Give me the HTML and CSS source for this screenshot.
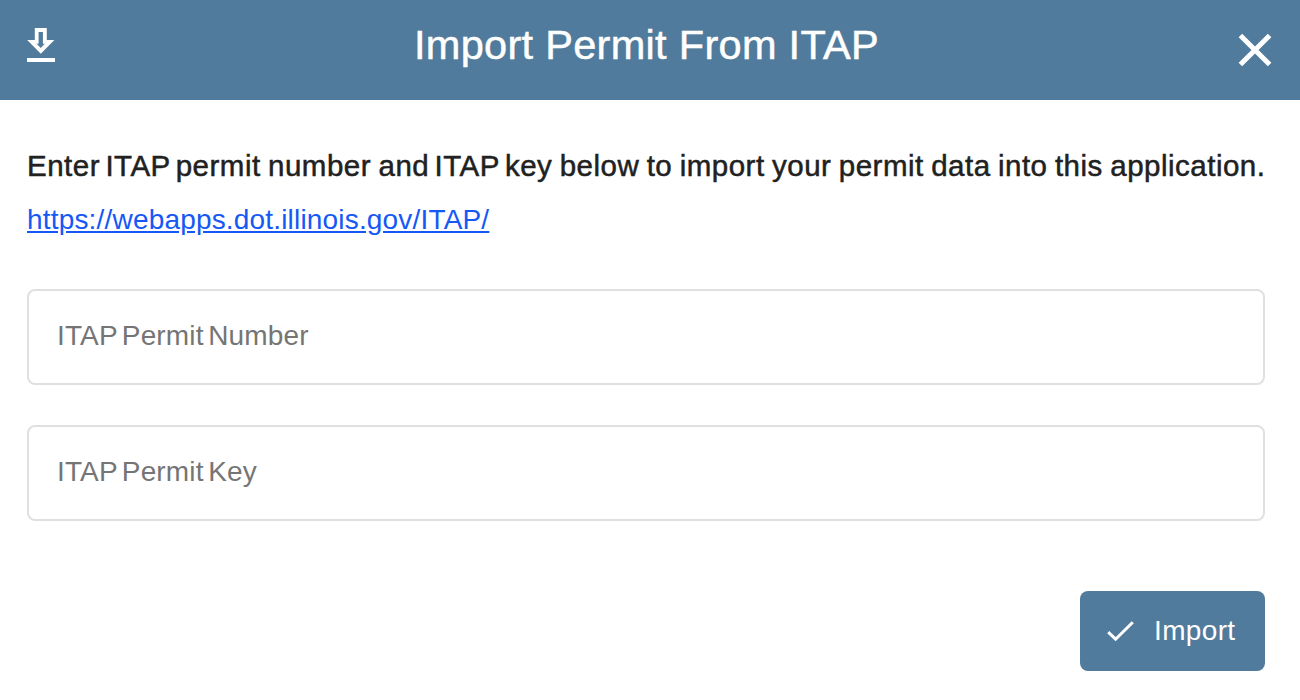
FILE: index.html
```html
<!DOCTYPE html>
<html lang="en">
<head>
    <meta charset="UTF-8">
    <meta name="viewport" content="width=device-width, initial-scale=1.0">
    <title>Import Permit From ITAP</title>
    <link rel="stylesheet" href="styles.css">
</head>
<body>
    <div class="dialog">
        <header class="dialog-header">
            <svg class="icon-download" viewBox="0 0 28 35" aria-hidden="true">
                <path d="M7.8 0h12v12h7.6L13.8 25.8.2 12h7.6zM11.6 4v11.7h-2l4.1 4.3 4.1-4.3h-1.9V4z" fill="currentColor" fill-rule="evenodd"/>
                <path d="M0 30h28v4H0z" fill="currentColor"/>
            </svg>
            <h1>Import Permit From ITAP</h1>
            <button class="close-btn" type="button" aria-label="Close">
                <svg viewBox="0 0 34 34" aria-hidden="true">
                    <path d="M2.4 2.6l29.2 29M31.6 2.6L2.4 31.6" fill="none" stroke="currentColor" stroke-width="5"/>
                </svg>
            </button>
        </header>

        <form class="dialog-body">
            <p class="intro">Enter <span class="itap">ITAP</span> permit number and <span class="itap">ITAP</span> key below to import your permit data into this application.</p>
            <a class="itap-link" href="https://webapps.dot.illinois.gov/ITAP/">https://webapps.dot.illinois.gov/ITAP/</a>

            <input class="field" type="text" placeholder="ITAP Permit Number">
            <input class="field" type="text" placeholder="ITAP Permit Key">

            <div class="actions">
                <button class="import-btn" type="button">
                    <svg viewBox="0 0 27 20" aria-hidden="true">
                        <path d="M1.2 11.2l7.4 7L25.8 1.3" fill="none" stroke="currentColor" stroke-width="3"/>
                    </svg>
                    <span>Import</span>
                </button>
            </div>
        </form>
    </div>
</body>
</html>
```

FILE: styles.css
```css
:root {
    --primary: #507b9c;
    --text-color: #212121;
    --link-color: #1558f5;
    --placeholder: #757575;
    --border-color: #e0e0e0;
}

* {
    margin: 0;
    padding: 0;
    box-sizing: border-box;
}

body {
    font-family: "Liberation Sans", Arial, sans-serif;
    background: #fff;
    color: var(--text-color);
}

.dialog {
    height: 700px;
    overflow: hidden;
}

.dialog-header {
    display: flex;
    justify-content: space-between;
    align-items: flex-start;
    height: 100px;
    padding: 0 28px 0 27px;
    background: var(--primary);
    color: #fff;
}

.icon-download {
    width: 28px;
    height: 35px;
    margin-top: 28px;
}

.dialog-header h1 {
    margin-top: 20px;
    font-size: 41.5px;
    font-weight: 400;
    letter-spacing: 0.3px;
    line-height: 50px;
    -webkit-text-stroke: 0.5px currentColor;
}

.close-btn {
    width: 34px;
    height: 34px;
    margin-top: 33px;
    border: none;
    background: none;
    color: inherit;
    cursor: pointer;
}

.close-btn svg {
    display: block;
}

.dialog-body {
    display: flex;
    flex-direction: column;
    padding: 46px 35px 0 27px;
}

.intro {
    font-size: 29.5px;
    letter-spacing: 0.5px;
    word-spacing: -1.3px;
    line-height: 40px;
    white-space: nowrap;
    -webkit-text-stroke: 0.5px currentColor;
}

.intro .itap {
    margin: 0 -2.5px 0 -2px;
}

.itap-link {
    align-self: flex-start;
    margin: 14px 0 49px;
    color: var(--link-color);
    font-size: 28px;
    letter-spacing: 0.18px;
    line-height: 40px;
}

.field {
    height: 96px;
    margin-bottom: 40px;
    padding: 0 28px 2px;
    border: 2px solid var(--border-color);
    border-radius: 8px;
    font-family: inherit;
    font-size: 28px;
    letter-spacing: 0.14px;
    word-spacing: -3.3px;
}

.field::placeholder {
    color: var(--placeholder);
}

.actions {
    display: flex;
    justify-content: flex-end;
    margin-top: 30px;
}

.import-btn {
    display: flex;
    align-items: center;
    gap: 20px;
    width: 185px;
    height: 80px;
    padding: 0 27px;
    border: none;
    border-radius: 8px;
    background: var(--primary);
    color: #fff;
    font-family: inherit;
    font-size: 28px;
    letter-spacing: 0.35px;
    cursor: pointer;
}

.import-btn svg {
    width: 27px;
    height: 20px;
}
```
